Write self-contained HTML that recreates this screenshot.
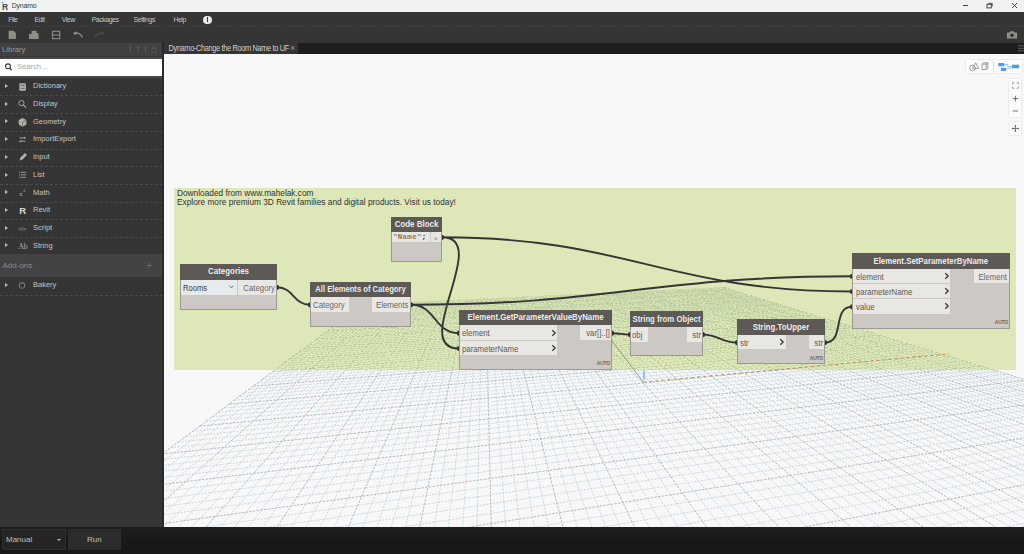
<!DOCTYPE html><html><head><meta charset='utf-8'><style>
*{box-sizing:border-box}
html,body{margin:0;padding:0;width:1024px;height:554px;overflow:hidden;background:#353535;font-family:"Liberation Sans",sans-serif}
.a{position:absolute}
.t{position:absolute;white-space:nowrap;line-height:1}
</style></head><body>
<div class='a' style='left:0;top:0;width:1024px;height:11.5px;background:#f1f2f2'></div>
<div class='t' style='left:11.7px;top:2.5px;font-size:6.9px;letter-spacing:-0.15px;color:#3a3a3a;transform:scaleY(1.08)'>Dynamo</div>
<div class='a' style='left:0;top:11.5px;width:1024px;height:30.5px;background:#353535'></div>
<div class='a' style='left:164px;top:43.3px;width:860px;height:10.7px;background:#1e1e1f'></div>
<div class='a' style='left:164px;top:42px;width:134px;height:12px;background:#353535'></div>
<div class='a' style='left:0;top:43px;width:162px;height:13.3px;background:#414141'></div>
<div class='a' style='left:0;top:56.5px;width:162px;height:21.5px;background:#474747'></div>
<div class='a' style='left:0;top:59px;width:162.2px;height:16.7px;background:#fff'></div>
<div class='a' style='left:162px;top:42px;width:2px;height:485px;background:#2a2a2a'></div>
<div class='a' style='left:164px;top:54px;width:860px;height:473px;background:#f8f8f8;overflow:hidden'>
<svg width='860' height='473' style='position:absolute;left:0;top:0'>
<defs><clipPath id='cfar'><rect x='0' y='0' width='860' height='316'/></clipPath><clipPath id='cnear'><rect x='0' y='316' width='860' height='473'/></clipPath></defs>
<g clip-path='url(#cfar)'>
<path d='M203.1 250.3L-720.3 963.0M207.4 250.1L-665.7 948.3M211.7 249.9L-613.0 934.2M216.0 249.7L-562.2 920.6M224.6 249.3L-465.6 894.7M228.8 249.1L-419.7 882.4M233.0 248.9L-375.3 870.5M237.3 248.7L-332.3 859.0M245.6 248.3L-250.4 837.0M249.8 248.1L-211.3 826.6M253.9 247.9L-173.4 816.4M258.0 247.7L-136.6 806.5M266.2 247.3L-66.2 787.7M270.3 247.1L-32.5 778.6M274.4 246.9L0.3 769.9M278.4 246.7L32.2 761.3M286.5 246.4L93.3 744.9M290.5 246.2L122.7 737.1M294.4 246.0L151.2 729.4M298.4 245.8L179.1 722.0M306.3 245.4L232.7 707.6M310.2 245.2L258.5 700.7M314.1 245.1L283.7 693.9M318.0 244.9L308.2 687.4M325.7 244.5L355.6 674.7M329.6 244.3L378.4 668.6M333.4 244.2L400.8 662.6M337.2 244.0L422.6 656.7M344.8 243.6L464.7 645.4M348.6 243.4L485.1 640.0M352.3 243.3L505.0 634.6M356.0 243.1L524.5 629.4M363.5 242.7L562.3 619.3M367.2 242.6L580.6 614.4M370.9 242.4L598.5 609.6M374.5 242.2L616.1 604.9M381.8 241.9L650.1 595.8M385.5 241.7L666.6 591.3M389.1 241.5L682.8 587.0M392.7 241.4L698.6 582.8M399.8 241.0L729.5 574.5M403.4 240.9L744.4 570.5M406.9 240.7L759.1 566.6M410.5 240.5L773.5 562.7M417.5 240.2L801.6 555.2M421.0 240.0L815.2 551.5M424.5 239.9L828.6 547.9M427.9 239.7L841.8 544.4M434.8 239.4L867.4 537.6M438.3 239.2L879.9 534.2M441.7 239.1L892.1 530.9M445.1 238.9L904.2 527.7M451.9 238.6L927.7 521.4M455.2 238.4L939.1 518.3M458.6 238.3L950.4 515.3M461.9 238.1L961.5 512.3M468.6 237.8L983.1 506.5M471.9 237.7L993.7 503.7M475.2 237.5L1004.1 500.9M478.5 237.4L1014.3 498.2M485.0 237.0L1034.3 492.8M488.3 236.9L1044.1 490.2M491.5 236.7L1053.7 487.6M494.7 236.6L1063.2 485.1M501.2 236.3L1081.7 480.1M504.3 236.1L1090.7 477.7M507.5 236.0L1099.7 475.3M510.7 235.8L1108.4 473.0M517.0 235.5L1125.7 468.4M520.1 235.4L1134.1 466.1M523.3 235.3L1142.4 463.9M526.4 235.1L1150.6 461.7M532.6 234.8L1166.6 457.4M535.7 234.7L1174.4 455.3M538.7 234.5L1182.2 453.2M541.8 234.4L1189.8 451.2M547.9 234.1L1204.8 447.2M550.9 234.0L1212.1 445.2M553.9 233.8L1219.3 443.3M556.9 233.7L1226.5 441.3M198.7 250.5L559.9 233.5M197.5 251.4L561.9 234.1M196.3 252.3L563.9 234.8M193.8 254.2L568.1 236.0M192.4 255.2L570.2 236.7M191.1 256.2L572.4 237.3M189.7 257.2L574.6 238.0M186.9 259.3L579.1 239.4M185.4 260.4L581.4 240.1M184.0 261.5L583.7 240.8M182.4 262.6L586.1 241.5M179.3 265.0L591.1 243.1M177.6 266.2L593.6 243.8M176.0 267.5L596.2 244.6M174.3 268.7L598.8 245.4M170.7 271.4L604.3 247.1M168.9 272.8L607.0 247.9M167.0 274.2L609.9 248.8M165.0 275.6L612.8 249.7M161.0 278.6L618.8 251.5M158.9 280.2L621.9 252.5M156.8 281.8L625.0 253.4M154.6 283.4L628.2 254.4M150.0 286.8L634.9 256.4M147.6 288.6L638.3 257.5M145.2 290.4L641.8 258.6M142.6 292.3L645.4 259.6M137.3 296.3L652.8 261.9M134.6 298.3L656.6 263.1M131.7 300.4L660.5 264.3M128.8 302.6L664.5 265.5M122.6 307.2L672.8 268.0M119.4 309.6L677.1 269.4M116.1 312.1L681.6 270.7M112.6 314.7L686.1 272.1M105.3 320.1L695.5 275.0M101.5 323.0L700.4 276.5M97.6 325.9L705.4 278.0M93.4 329.0L710.5 279.6M84.7 335.5L721.2 282.8M80.1 338.9L726.8 284.5M75.4 342.5L732.5 286.3M70.4 346.2L738.4 288.1M59.8 354.1L750.8 291.9M54.1 358.3L757.2 293.8M48.2 362.7L763.8 295.9M42.1 367.3L770.7 298.0M28.8 377.2L785.0 302.3M21.8 382.5L792.5 304.6M14.3 388.0L800.2 307.0M6.5 393.8L808.3 309.4M-10.4 406.5L825.1 314.6M-19.6 413.3L834.0 317.3M-29.3 420.5L843.2 320.1M-39.5 428.1L852.7 323.0M-61.9 444.9L872.8 329.2M-74.2 454.0L883.5 332.4M-87.3 463.8L894.5 335.8M-101.4 474.3L906.1 339.3M-132.5 497.5L930.5 346.8M-149.8 510.4L943.5 350.8M-168.6 524.4L957.1 354.9M-188.9 539.5L971.3 359.3M-235.0 573.9L1001.6 368.6M-261.4 593.6L1017.9 373.5M-290.3 615.2L1034.9 378.7M-322.4 639.1L1052.8 384.2M-397.7 695.2L1091.4 396.0M-442.3 728.5L1112.3 402.4M-492.9 766.3L1134.4 409.1M-550.8 809.4L1157.7 416.3M-695.2 917.1L1208.6 431.8' stroke='#c2cfd8' stroke-width='1' stroke-dasharray='2.5 1.5' shape-rendering='crispEdges' fill='none'/>
<path d='M198.7 250.5L-777.0 978.1M220.3 249.5L-513.1 907.4M241.4 248.5L-290.7 847.8M262.2 247.5L-100.9 797.0M282.5 246.5L63.1 753.0M302.4 245.6L206.2 714.7M321.9 244.7L332.2 680.9M341.0 243.8L443.9 651.0M359.8 242.9L543.6 624.3M378.2 242.1L633.2 600.3M396.3 241.2L714.2 578.6M414.0 240.4L787.7 558.9M431.4 239.6L854.7 541.0M448.5 238.8L916.0 524.5M465.3 238.0L972.4 509.4M481.8 237.2L1024.4 495.5M498.0 236.4L1072.5 482.6M513.9 235.7L1117.1 470.6M529.5 235.0L1158.6 459.5M544.8 234.2L1197.3 449.1M559.9 233.5L1233.5 439.5M195.0 253.2L566.0 235.4M188.3 258.2L576.8 238.7M180.9 263.8L588.6 242.3M172.5 270.0L601.5 246.2M163.1 277.1L615.8 250.6M152.3 285.1L631.5 255.4M140.0 294.3L649.0 260.8M125.8 304.9L668.6 266.8M109.0 317.4L690.7 273.5M89.2 332.2L715.8 281.2M65.2 350.1L744.5 290.0M35.6 372.1L777.7 300.1M-1.7 400.0L816.5 312.0M-50.4 436.3L862.6 326.1M-116.4 485.5L918.0 343.0M-211.0 556.0L986.1 363.8M-357.9 665.6L1071.6 390.0M-617.4 859.1L1182.4 423.8' stroke='#a6b2ba' stroke-width='1' stroke-dasharray='3 1.5' shape-rendering='crispEdges' fill='none'/>
</g><g clip-path='url(#cnear)'>
<path d='M203.1 250.3L-720.3 963.0M207.4 250.1L-665.7 948.3M211.7 249.9L-613.0 934.2M216.0 249.7L-562.2 920.6M224.6 249.3L-465.6 894.7M228.8 249.1L-419.7 882.4M233.0 248.9L-375.3 870.5M237.3 248.7L-332.3 859.0M245.6 248.3L-250.4 837.0M249.8 248.1L-211.3 826.6M253.9 247.9L-173.4 816.4M258.0 247.7L-136.6 806.5M266.2 247.3L-66.2 787.7M270.3 247.1L-32.5 778.6M274.4 246.9L0.3 769.9M278.4 246.7L32.2 761.3M286.5 246.4L93.3 744.9M290.5 246.2L122.7 737.1M294.4 246.0L151.2 729.4M298.4 245.8L179.1 722.0M306.3 245.4L232.7 707.6M310.2 245.2L258.5 700.7M314.1 245.1L283.7 693.9M318.0 244.9L308.2 687.4M325.7 244.5L355.6 674.7M329.6 244.3L378.4 668.6M333.4 244.2L400.8 662.6M337.2 244.0L422.6 656.7M344.8 243.6L464.7 645.4M348.6 243.4L485.1 640.0M352.3 243.3L505.0 634.6M356.0 243.1L524.5 629.4M363.5 242.7L562.3 619.3M367.2 242.6L580.6 614.4M370.9 242.4L598.5 609.6M374.5 242.2L616.1 604.9M381.8 241.9L650.1 595.8M385.5 241.7L666.6 591.3M389.1 241.5L682.8 587.0M392.7 241.4L698.6 582.8M399.8 241.0L729.5 574.5M403.4 240.9L744.4 570.5M406.9 240.7L759.1 566.6M410.5 240.5L773.5 562.7M417.5 240.2L801.6 555.2M421.0 240.0L815.2 551.5M424.5 239.9L828.6 547.9M427.9 239.7L841.8 544.4M434.8 239.4L867.4 537.6M438.3 239.2L879.9 534.2M441.7 239.1L892.1 530.9M445.1 238.9L904.2 527.7M451.9 238.6L927.7 521.4M455.2 238.4L939.1 518.3M458.6 238.3L950.4 515.3M461.9 238.1L961.5 512.3M468.6 237.8L983.1 506.5M471.9 237.7L993.7 503.7M475.2 237.5L1004.1 500.9M478.5 237.4L1014.3 498.2M485.0 237.0L1034.3 492.8M488.3 236.9L1044.1 490.2M491.5 236.7L1053.7 487.6M494.7 236.6L1063.2 485.1M501.2 236.3L1081.7 480.1M504.3 236.1L1090.7 477.7M507.5 236.0L1099.7 475.3M510.7 235.8L1108.4 473.0M517.0 235.5L1125.7 468.4M520.1 235.4L1134.1 466.1M523.3 235.3L1142.4 463.9M526.4 235.1L1150.6 461.7M532.6 234.8L1166.6 457.4M535.7 234.7L1174.4 455.3M538.7 234.5L1182.2 453.2M541.8 234.4L1189.8 451.2M547.9 234.1L1204.8 447.2M550.9 234.0L1212.1 445.2M553.9 233.8L1219.3 443.3M556.9 233.7L1226.5 441.3M198.7 250.5L559.9 233.5M197.5 251.4L561.9 234.1M196.3 252.3L563.9 234.8M193.8 254.2L568.1 236.0M192.4 255.2L570.2 236.7M191.1 256.2L572.4 237.3M189.7 257.2L574.6 238.0M186.9 259.3L579.1 239.4M185.4 260.4L581.4 240.1M184.0 261.5L583.7 240.8M182.4 262.6L586.1 241.5M179.3 265.0L591.1 243.1M177.6 266.2L593.6 243.8M176.0 267.5L596.2 244.6M174.3 268.7L598.8 245.4M170.7 271.4L604.3 247.1M168.9 272.8L607.0 247.9M167.0 274.2L609.9 248.8M165.0 275.6L612.8 249.7M161.0 278.6L618.8 251.5M158.9 280.2L621.9 252.5M156.8 281.8L625.0 253.4M154.6 283.4L628.2 254.4M150.0 286.8L634.9 256.4M147.6 288.6L638.3 257.5M145.2 290.4L641.8 258.6M142.6 292.3L645.4 259.6M137.3 296.3L652.8 261.9M134.6 298.3L656.6 263.1M131.7 300.4L660.5 264.3M128.8 302.6L664.5 265.5M122.6 307.2L672.8 268.0M119.4 309.6L677.1 269.4M116.1 312.1L681.6 270.7M112.6 314.7L686.1 272.1M105.3 320.1L695.5 275.0M101.5 323.0L700.4 276.5M97.6 325.9L705.4 278.0M93.4 329.0L710.5 279.6M84.7 335.5L721.2 282.8M80.1 338.9L726.8 284.5M75.4 342.5L732.5 286.3M70.4 346.2L738.4 288.1M59.8 354.1L750.8 291.9M54.1 358.3L757.2 293.8M48.2 362.7L763.8 295.9M42.1 367.3L770.7 298.0M28.8 377.2L785.0 302.3M21.8 382.5L792.5 304.6M14.3 388.0L800.2 307.0M6.5 393.8L808.3 309.4M-10.4 406.5L825.1 314.6M-19.6 413.3L834.0 317.3M-29.3 420.5L843.2 320.1M-39.5 428.1L852.7 323.0M-61.9 444.9L872.8 329.2M-74.2 454.0L883.5 332.4M-87.3 463.8L894.5 335.8M-101.4 474.3L906.1 339.3M-132.5 497.5L930.5 346.8M-149.8 510.4L943.5 350.8M-168.6 524.4L957.1 354.9M-188.9 539.5L971.3 359.3M-235.0 573.9L1001.6 368.6M-261.4 593.6L1017.9 373.5M-290.3 615.2L1034.9 378.7M-322.4 639.1L1052.8 384.2M-397.7 695.2L1091.4 396.0M-442.3 728.5L1112.3 402.4M-492.9 766.3L1134.4 409.1M-550.8 809.4L1157.7 416.3M-695.2 917.1L1208.6 431.8' stroke='#bccfdc' stroke-width='0.75' stroke-dasharray='2.2 1.2' fill='none'/>
<path d='M198.7 250.5L-777.0 978.1M220.3 249.5L-513.1 907.4M241.4 248.5L-290.7 847.8M262.2 247.5L-100.9 797.0M282.5 246.5L63.1 753.0M302.4 245.6L206.2 714.7M321.9 244.7L332.2 680.9M341.0 243.8L443.9 651.0M359.8 242.9L543.6 624.3M378.2 242.1L633.2 600.3M396.3 241.2L714.2 578.6M414.0 240.4L787.7 558.9M431.4 239.6L854.7 541.0M448.5 238.8L916.0 524.5M465.3 238.0L972.4 509.4M481.8 237.2L1024.4 495.5M498.0 236.4L1072.5 482.6M513.9 235.7L1117.1 470.6M529.5 235.0L1158.6 459.5M544.8 234.2L1197.3 449.1M559.9 233.5L1233.5 439.5M195.0 253.2L566.0 235.4M188.3 258.2L576.8 238.7M180.9 263.8L588.6 242.3M172.5 270.0L601.5 246.2M163.1 277.1L615.8 250.6M152.3 285.1L631.5 255.4M140.0 294.3L649.0 260.8M125.8 304.9L668.6 266.8M109.0 317.4L690.7 273.5M89.2 332.2L715.8 281.2M65.2 350.1L744.5 290.0M35.6 372.1L777.7 300.1M-1.7 400.0L816.5 312.0M-50.4 436.3L862.6 326.1M-116.4 485.5L918.0 343.0M-211.0 556.0L986.1 363.8M-357.9 665.6L1071.6 390.0M-617.4 859.1L1182.4 423.8' stroke='#9fadb7' stroke-width='0.8' stroke-dasharray='2.5 1.2' fill='none'/>
</g>
</svg>
</div>
<div class='a' style='left:0;top:527px;width:1024px;height:27px;background:linear-gradient(#1f1f1f 0px,#1d1d1d 6px,#181818 13px,#181818)'></div>
<div class='t' style='left:8.2px;top:16.2px;font-size:7px;letter-spacing:-0.5px;color:#c4c4c4;transform:scaleY(1.1)'>File</div>
<div class='t' style='left:34.4px;top:16.2px;font-size:7px;letter-spacing:-0.5px;color:#c4c4c4;transform:scaleY(1.1)'>Edit</div>
<div class='t' style='left:61.7px;top:16.2px;font-size:7px;letter-spacing:-0.5px;color:#c4c4c4;transform:scaleY(1.1)'>View</div>
<div class='t' style='left:91.7px;top:16.2px;font-size:7px;letter-spacing:-0.5px;color:#c4c4c4;transform:scaleY(1.1)'>Packages</div>
<div class='t' style='left:133.6px;top:16.2px;font-size:7px;letter-spacing:-0.5px;color:#c4c4c4;transform:scaleY(1.1)'>Settings</div>
<div class='t' style='left:173.6px;top:16.2px;font-size:7px;letter-spacing:-0.5px;color:#c4c4c4;transform:scaleY(1.1)'>Help</div>
<div class='a' style='left:203px;top:15.5px;width:8.5px;height:8.5px;border-radius:50%;background:#e8e8e8'></div>
<div class='a' style='left:206.6px;top:17px;width:1.4px;height:3.6px;background:#353535'></div>
<div class='a' style='left:206.6px;top:21.2px;width:1.4px;height:1.3px;background:#353535'></div>
<div class='a' style='left:0;top:26px;width:1024px;height:1px;background:repeating-linear-gradient(90deg,#4a4a4a 0 1px,transparent 1px 3px)'></div>
<div class='t' style='left:2px;top:45.5px;font-size:7.6px;color:#9a9a9a'>Library</div>
<div class='t' style='left:17px;top:63px;font-size:7.6px;color:#a8a8a8'>Search...</div>
<svg class='a' style='left:4px;top:62px' width='9' height='10'><circle cx='4' cy='4.3' r='2.4' stroke='#333' stroke-width='1.1' fill='none'/><path d='M5.7 6.1 L7.6 8.2' stroke='#333' stroke-width='1.3'/></svg>
<div class='t' style='left:33px;top:82.2px;font-size:7.5px;color:#c2c2c2'>Dictionary</div>
<div class='a' style='left:5px;top:83.9px;width:0;height:0;border-left:3.6px solid #bdbdbd;border-top:2.3px solid transparent;border-bottom:2.3px solid transparent'></div>
<div class='a' style='left:0;top:95.3px;width:162px;height:1px;background:repeating-linear-gradient(90deg,#4b4b4b 0 3px,transparent 3px 5px)'></div>
<div class='t' style='left:33px;top:99.9px;font-size:7.5px;color:#c2c2c2'>Display</div>
<div class='a' style='left:5px;top:101.6px;width:0;height:0;border-left:3.6px solid #bdbdbd;border-top:2.3px solid transparent;border-bottom:2.3px solid transparent'></div>
<div class='a' style='left:0;top:113.0px;width:162px;height:1px;background:repeating-linear-gradient(90deg,#4b4b4b 0 3px,transparent 3px 5px)'></div>
<div class='t' style='left:33px;top:117.6px;font-size:7.5px;color:#c2c2c2'>Geometry</div>
<div class='a' style='left:5px;top:119.3px;width:0;height:0;border-left:3.6px solid #bdbdbd;border-top:2.3px solid transparent;border-bottom:2.3px solid transparent'></div>
<div class='a' style='left:0;top:130.7px;width:162px;height:1px;background:repeating-linear-gradient(90deg,#4b4b4b 0 3px,transparent 3px 5px)'></div>
<div class='t' style='left:33px;top:135.4px;font-size:7.5px;color:#c2c2c2'>ImportExport</div>
<div class='a' style='left:5px;top:137.1px;width:0;height:0;border-left:3.6px solid #bdbdbd;border-top:2.3px solid transparent;border-bottom:2.3px solid transparent'></div>
<div class='a' style='left:0;top:148.5px;width:162px;height:1px;background:repeating-linear-gradient(90deg,#4b4b4b 0 3px,transparent 3px 5px)'></div>
<div class='t' style='left:33px;top:153.1px;font-size:7.5px;color:#c2c2c2'>Input</div>
<div class='a' style='left:5px;top:154.8px;width:0;height:0;border-left:3.6px solid #bdbdbd;border-top:2.3px solid transparent;border-bottom:2.3px solid transparent'></div>
<div class='a' style='left:0;top:166.2px;width:162px;height:1px;background:repeating-linear-gradient(90deg,#4b4b4b 0 3px,transparent 3px 5px)'></div>
<div class='t' style='left:33px;top:170.8px;font-size:7.5px;color:#c2c2c2'>List</div>
<div class='a' style='left:5px;top:172.5px;width:0;height:0;border-left:3.6px solid #bdbdbd;border-top:2.3px solid transparent;border-bottom:2.3px solid transparent'></div>
<div class='a' style='left:0;top:183.9px;width:162px;height:1px;background:repeating-linear-gradient(90deg,#4b4b4b 0 3px,transparent 3px 5px)'></div>
<div class='t' style='left:33px;top:188.5px;font-size:7.5px;color:#c2c2c2'>Math</div>
<div class='a' style='left:5px;top:190.2px;width:0;height:0;border-left:3.6px solid #bdbdbd;border-top:2.3px solid transparent;border-bottom:2.3px solid transparent'></div>
<div class='a' style='left:0;top:201.6px;width:162px;height:1px;background:repeating-linear-gradient(90deg,#4b4b4b 0 3px,transparent 3px 5px)'></div>
<div class='t' style='left:33px;top:206.2px;font-size:7.5px;color:#c2c2c2'>Revit</div>
<div class='a' style='left:5px;top:207.9px;width:0;height:0;border-left:3.6px solid #bdbdbd;border-top:2.3px solid transparent;border-bottom:2.3px solid transparent'></div>
<div class='a' style='left:0;top:219.3px;width:162px;height:1px;background:repeating-linear-gradient(90deg,#4b4b4b 0 3px,transparent 3px 5px)'></div>
<div class='t' style='left:33px;top:224.0px;font-size:7.5px;color:#c2c2c2'>Script</div>
<div class='a' style='left:5px;top:225.7px;width:0;height:0;border-left:3.6px solid #bdbdbd;border-top:2.3px solid transparent;border-bottom:2.3px solid transparent'></div>
<div class='a' style='left:0;top:237.1px;width:162px;height:1px;background:repeating-linear-gradient(90deg,#4b4b4b 0 3px,transparent 3px 5px)'></div>
<div class='t' style='left:33px;top:241.7px;font-size:7.5px;color:#c2c2c2'>String</div>
<div class='a' style='left:5px;top:243.4px;width:0;height:0;border-left:3.6px solid #bdbdbd;border-top:2.3px solid transparent;border-bottom:2.3px solid transparent'></div>
<div class='a' style='left:0;top:254.8px;width:162px;height:1px;background:repeating-linear-gradient(90deg,#4b4b4b 0 3px,transparent 3px 5px)'></div>
<div class='a' style='left:0;top:254px;width:162px;height:23px;background:#434343'></div>
<div class='t' style='left:2.5px;top:261.5px;font-size:8px;color:#8a8a8a'>Add-ons</div>
<div class='t' style='left:146px;top:260px;font-size:11px;color:#6a6a6a'>+</div>
<div class='t' style='left:33px;top:281.3px;font-size:7.5px;color:#c2c2c2'>Bakery</div>
<div class='a' style='left:5px;top:283px;width:0;height:0;border-left:3.6px solid #bdbdbd;border-top:2.3px solid transparent;border-bottom:2.3px solid transparent'></div>
<div class='a' style='left:0;top:294.5px;width:162px;height:1px;background:repeating-linear-gradient(90deg,#4b4b4b 0 3px,transparent 3px 5px)'></div>
<svg class='a' style='left:0;top:0' width='1024' height='554'><text x='2' y='9.6' font-family='Liberation Sans' font-weight='bold' font-size='8.5' fill='#4a4a4a'>R</text><path d='M1.8 2.6h1.5M6.5 9.7h1.5' stroke='#3d9be9' stroke-width='1.2'/><path d='M963 5.5h5' stroke='#333' stroke-width='0.9'/><rect x='987' y='4.3' width='4.3' height='3.6' fill='none' stroke='#333' stroke-width='0.9'/><path d='M988.3 3.3h3.9v3.4' stroke='#333' stroke-width='0.8' fill='none'/><path d='M1012 3l5 5M1017 3l-5 5' stroke='#333' stroke-width='0.9'/><path d='M8.6 30.7h5l2.3 2.3v6h-7.3z' fill='#8e8e86'/><path d='M31.5 30.8h5v3h-5z' fill='#8e8e86'/><path d='M29 34h3l1 -1h4.5l1.2 1v5h-9.7z' fill='#8e8e86'/><rect x='52.5' y='31.3' width='7.2' height='7.4' fill='none' stroke='#8e8e86' stroke-width='1.1'/><path d='M52.5 35h7.2' stroke='#8e8e86' stroke-width='1'/><path d='M74 33.2 C77 32.5 80.5 33.5 82.5 37.5' stroke='#8e8e86' stroke-width='1.3' fill='none'/><path d='M73 33.4 L76.3 31 L76.3 35.3z' fill='#8e8e86'/><path d='M103.5 33.2 C100.5 32.5 97 33.5 95 37.5' stroke='#4b4b4b' stroke-width='1.3' fill='none'/><path d='M104.5 33.4 L101.2 31 L101.2 35.3z' fill='#4b4b4b'/><path d='M1007 32.5h2.5l1-1.3h3l1 1.3h2.5v6h-10z' fill='#8f8f84'/><circle cx='1012' cy='35.3' r='1.7' fill='#2a2a2a'/><path d='M130.4 46v6M145.5 46v6' stroke='#5c5c5c' stroke-width='1'/><path d='M136 46.5h4.5l-1.7 2.2v2.6l-1.1 0.6v-3.2z' fill='#575757'/><path d='M151 52.5h6M152 52v-3.5h4v3.5M153 48.5v-1.5h2v1.5' stroke='#575757' stroke-width='0.8' fill='none'/><rect x='19.3' y='83.2' width='6.6' height='7.6' rx='1' fill='#b0b0a8'/><path d='M20.5 85.4h4.2M20.5 88.4h4.2' stroke='#555' stroke-width='0.8'/><circle cx='21.5' cy='103.1' r='2.6' fill='none' stroke='#b0b0a8' stroke-width='0.9'/><path d='M23.3 104.9l2.7 2.7' stroke='#b0b0a8' stroke-width='1.1'/><path d='M18.7 120.1l3.8-2.2 3.9 2.2v4.5l-3.9 2.2-3.8-2.2z' fill='#b0b0a8'/><path d='M22.5 122.2l3.9-2.1M22.5 122.2v4' stroke='#555' stroke-width='0.6'/><path d='M19.5 137.9h6M19.5 141.2h6' stroke='#b0b0a8' stroke-width='0.9'/><path d='M25.8 137.9l-1.5-1.2v2.4z M19.2 141.2l1.5-1.2v2.4z' fill='#b0b0a8'/><path d='M19.5 160.6l1-3 4.5-4.5 2 2-4.5 4.5z' fill='#b0b0a8'/><path d='M19 172.3h7M19 174.8h7M19 177.3h7' stroke='#b0b0a8' stroke-width='0.8' stroke-dasharray='1 0.6 6'/><text x='19' y='195.8' font-family='Liberation Serif' font-size='7' fill='#b0b0a8'>x</text><text x='23.2' y='191.7' font-family='Liberation Sans' font-size='3.8' fill='#b0b0a8'>2</text><text x='19.2' y='213.8' font-family='Liberation Sans' font-weight='bold' font-size='9.5' fill='#d8d8d8'>R</text><text x='18.2' y='230.6' font-family='Liberation Sans' font-size='5.6' fill='#b0b0a8'>&lt;/&gt;</text><text x='18.4' y='248.7' font-family='Liberation Serif' font-size='7.6' fill='#b0b0a8'>Ab</text><circle cx='22' cy='285.5' r='2.8' fill='none' stroke='#8a8a8a' stroke-width='1'/><path d='M19.5 288h5' stroke='#3b4a70' stroke-width='0.9'/><path d='M1018 45.8h6M1018 48.3h6M1018 50.8h6' stroke='#7a7a7a' stroke-width='0.7'/></svg>
<div class='t' style='left:168.5px;top:44.8px;font-size:7.4px;letter-spacing:-0.35px;color:#cfcfcf;transform:scaleY(1.12)'>Dynamo-Change the Room Name to UF</div>
<div class='t' style='left:290px;top:44px;font-size:9px;color:#9a9a9a'>&#215;</div>
<div class='a' style='left:2px;top:529px;width:64px;height:21px;background:#252525;border:1px solid #303030'></div>
<div class='t' style='left:6px;top:536.3px;font-size:8px;color:#c0c0b8'>Manual</div>
<div class='a' style='left:56.5px;top:539px;width:0;height:0;border-top:2.5px solid #bbb;border-left:2.5px solid transparent;border-right:2.5px solid transparent'></div>
<div class='a' style='left:67.5px;top:529px;width:53.5px;height:21px;background:#2c2c2c'></div>
<div class='t' style='left:87px;top:536.3px;font-size:8px;color:#c0c0b8'>Run</div>
<div class='a' style='left:174px;top:187.5px;width:841.5px;height:182.3px;background:rgba(203,220,140,0.6)'></div>
<div class='t' style='left:177px;top:188.5px;font-size:8.3px;line-height:9.5px;color:#333'>Downloaded from www.mahelak.com<br>Explore more premium 3D Revit families and digital products. Visit us today!</div>
<svg class='a' style='left:0;top:0' width='1024' height='554'><path d='M643.5 382 L949 354' stroke='#c98a4e' stroke-width='1' stroke-dasharray='3 3' fill='none'/><path d='M644 370.5 L644 379.5' stroke='#5aa8f0' stroke-width='1.2'/><path d='M644 383 L600 325' stroke='#6f7d66' stroke-width='0.7' fill='none'/></svg>
<svg class='a' style='left:0;top:0' width='1024' height='554'><path d='M277 287.3C293.8 287.3 293.2 304.8 310 304.8M411 304.8C436.1 304.8 433.9 333.2 459 333.2M411 304.8C609.9 304.8 653.1 276.3 852 276.3M442 237.3C492.6 237.3 408.4 348.5 459 348.5M442 237.3C628.1 237.3 665.9 291.5 852 291.5M612 333.2C620.1 333.2 621.9 334.6 630 334.6M703 334.6C718.7 334.6 721.3 342.6 737 342.6M825 342.6C845.2 342.6 831.8 306.8 852 306.8' stroke='#353535' stroke-width='1.9' fill='none'/><path d='M277 284.7A2.2 2.6 0 0 1 277 289.90000000000003Z M310 302.2A2.2 2.6 0 0 0 310 307.40000000000003Z M411 302.2A2.2 2.6 0 0 1 411 307.40000000000003Z M459 330.59999999999997A2.2 2.6 0 0 0 459 335.8Z M411 302.2A2.2 2.6 0 0 1 411 307.40000000000003Z M852 273.7A2.2 2.6 0 0 0 852 278.90000000000003Z M442 234.70000000000002A2.2 2.6 0 0 1 442 239.9Z M459 345.9A2.2 2.6 0 0 0 459 351.1Z M442 234.70000000000002A2.2 2.6 0 0 1 442 239.9Z M852 288.9A2.2 2.6 0 0 0 852 294.1Z M612 330.59999999999997A2.2 2.6 0 0 1 612 335.8Z M630 332.0A2.2 2.6 0 0 0 630 337.20000000000005Z M703 332.0A2.2 2.6 0 0 1 703 337.20000000000005Z M737 340.0A2.2 2.6 0 0 0 737 345.20000000000005Z M825 340.0A2.2 2.6 0 0 1 825 345.20000000000005Z M852 304.2A2.2 2.6 0 0 0 852 309.40000000000003Z ' fill='#333'/></svg>
<div class='a' style='left:180px;top:264px;width:97px;height:46px;background:#ccc8c3;border:1px solid #9c9893'></div>
<div class='a' style='left:180px;top:264px;width:97px;height:15.5px;background:#5d5955'></div>
<div class='t' style='left:180px;top:268.4px;width:97px;text-align:center;font-size:7.9559999999999995px;font-weight:bold;color:#ececec;transform:scaleY(1.12)'>Categories</div>
<div class='a' style='left:181px;top:279.5px;width:56px;height:15.0px;background:#e7eaec'></div>
<div class='a' style='left:238px;top:279.5px;width:38px;height:15.0px;background:#e8e7e3'></div>
<div class='t' style='left:183px;top:284.7px;font-size:7.6px;color:#3a3a3a;transform:scaleY(1.12)'>Rooms</div>
<svg class='a' style='left:229px;top:284.5px' width='5' height='4'><path d='M0.5 0.8 L2.4 2.8 L4.3 0.8' stroke='#555' stroke-width='0.9' fill='none'/></svg>
<div class='t' style='right:749px;top:284.9px;font-size:7.8px;color:#6a6864;transform:scaleY(1.12)'>Category</div>
<div class='a' style='left:391px;top:216.5px;width:51px;height:45.0px;background:#ccc8c3;border:1px solid #9c9893'></div>
<div class='a' style='left:391px;top:216.5px;width:51px;height:15.099999999999994px;background:#5d5955'></div>
<div class='t' style='left:391px;top:220.7px;width:51px;text-align:center;font-size:7.9559999999999995px;font-weight:bold;color:#ececec;transform:scaleY(1.12)'>Code Block</div>
<div class='a' style='left:392px;top:231.6px;width:38px;height:10.900000000000006px;background:#e7e6e2'></div>
<div class='a' style='left:431px;top:231.6px;width:10px;height:10.900000000000006px;background:#e8e7e3'></div>
<div class='t' style='left:393px;top:234.3px;font-family:"Liberation Mono",monospace;font-size:7.4px;font-weight:bold;letter-spacing:0.35px;color:#9a7448'><span style='color:#8a8a8a'>"</span>Name<span style='color:#8a8a8a'>"</span><span style='color:#222'>;</span></div>
<div class='t' style='left:433.5px;top:235.1px;font-size:7px;color:#777;transform:scaleY(1.12)'>&gt;</div>
<div class='a' style='left:310px;top:282px;width:101px;height:45px;background:#ccc8c3;border:1px solid #9c9893'></div>
<div class='a' style='left:310px;top:282px;width:101px;height:15px;background:#5d5955'></div>
<div class='t' style='left:310px;top:286.3px;width:101px;text-align:center;font-size:7.65px;font-weight:bold;color:#ececec;transform:scaleY(1.12)'>All Elements of Category</div>
<div class='a' style='left:311px;top:297px;width:38px;height:15px;background:#e8e7e3'></div>
<div class='a' style='left:372px;top:297px;width:38px;height:15px;background:#e8e7e3'></div>
<div class='t' style='left:313px;top:302.2px;font-size:7.8px;color:#6a6864;transform:scaleY(1.12)'>Category</div>
<div class='t' style='right:615.5px;top:302.2px;font-size:7.8px;color:#6a6864;transform:scaleY(1.12)'>Elements</div>
<div class='a' style='left:459px;top:310px;width:153px;height:59.5px;background:#ccc8c3;border:1px solid #9c9893'></div>
<div class='a' style='left:459px;top:310px;width:153px;height:14.600000000000023px;background:#5d5955'></div>
<div class='t' style='left:459px;top:314.0px;width:153px;text-align:center;font-size:7.854px;font-weight:bold;color:#ececec;transform:scaleY(1.12)'>Element.GetParameterValueByName</div>
<div class='a' style='left:460px;top:324.6px;width:97px;height:15.399999999999977px;background:#e8e7e3'></div>
<div class='a' style='left:460px;top:341px;width:97px;height:14.399999999999977px;background:#e8e7e3'></div>
<div class='a' style='left:580px;top:324.6px;width:31px;height:15.799999999999955px;background:#e8e7e3'></div>
<div class='t' style='left:462px;top:330.2px;font-size:7.8px;color:#5c5a56;transform:scaleY(1.12)'>element</div>
<div class='t' style='left:462px;top:345.6px;font-size:7.8px;color:#5c5a56;transform:scaleY(1.12)'>parameterName</div>
<svg class='a' style='left:550.5px;top:328.6px' width='6' height='8'><path d='M1.3 1.2 L4.2 4 L1.3 6.8' stroke='#3a3a3a' stroke-width='1.3' fill='none'/></svg>
<svg class='a' style='left:550.5px;top:344px' width='6' height='8'><path d='M1.3 1.2 L4.2 4 L1.3 6.8' stroke='#3a3a3a' stroke-width='1.3' fill='none'/></svg>
<div class='t' style='right:414px;top:330.2px;font-size:7.8px;color:#5c5a56;transform:scaleY(1.12)'>var[]..[]</div>
<div class='t' style='right:414px;top:360.5px;font-size:5px;font-weight:bold;color:#6e6a66;letter-spacing:-0.2px'>AUTO</div>
<div class='a' style='left:630px;top:311px;width:73px;height:45.30000000000001px;background:#ccc8c3;border:1px solid #9c9893'></div>
<div class='a' style='left:630px;top:311px;width:73px;height:15.800000000000011px;background:#5d5955'></div>
<div class='t' style='left:630px;top:315.7px;width:73px;text-align:center;font-size:7.752px;font-weight:bold;color:#ececec;transform:scaleY(1.12)'>String from Object</div>
<div class='a' style='left:631px;top:326.8px;width:17px;height:14.899999999999977px;background:#e8e7e3'></div>
<div class='a' style='left:686.5px;top:326.8px;width:15.5px;height:14.899999999999977px;background:#e8e7e3'></div>
<div class='t' style='left:632px;top:331.9px;font-size:7.8px;color:#5c5a56;transform:scaleY(1.12)'>obj</div>
<div class='t' style='right:323px;top:331.9px;font-size:7.8px;color:#5c5a56;transform:scaleY(1.12)'>str</div>
<div class='a' style='left:737px;top:319px;width:88px;height:45px;background:#ccc8c3;border:1px solid #9c9893'></div>
<div class='a' style='left:737px;top:319px;width:88px;height:15.800000000000011px;background:#5d5955'></div>
<div class='t' style='left:737px;top:323.6px;width:88px;text-align:center;font-size:7.854px;font-weight:bold;color:#ececec;transform:scaleY(1.12)'>String.ToUpper</div>
<div class='a' style='left:738px;top:334.8px;width:47.60000000000002px;height:14.5px;background:#e8e7e3'></div>
<div class='a' style='left:809px;top:334.8px;width:15px;height:14.5px;background:#e8e7e3'></div>
<div class='t' style='left:740px;top:339.8px;font-size:7.8px;color:#5c5a56;transform:scaleY(1.12)'>str</div>
<svg class='a' style='left:779px;top:338.2px' width='6' height='8'><path d='M1.3 1.2 L4.2 4 L1.3 6.8' stroke='#3a3a3a' stroke-width='1.3' fill='none'/></svg>
<div class='t' style='right:201px;top:339.8px;font-size:7.8px;color:#5c5a56;transform:scaleY(1.12)'>str</div>
<div class='t' style='right:201px;top:355.5px;font-size:5px;font-weight:bold;color:#6e6a66;letter-spacing:-0.2px'>AUTO</div>
<div class='a' style='left:852px;top:253px;width:157.60000000000002px;height:75.5px;background:#ccc8c3;border:1px solid #9c9893'></div>
<div class='a' style='left:852px;top:253px;width:157.60000000000002px;height:15.699999999999989px;background:#5d5955'></div>
<div class='t' style='left:852px;top:257.6px;width:157.60000000000002px;text-align:center;font-size:7.854px;font-weight:bold;color:#ececec;transform:scaleY(1.12)'>Element.SetParameterByName</div>
<div class='a' style='left:853px;top:268.7px;width:97px;height:14.5px;background:#e8e7e3'></div>
<div class='a' style='left:853px;top:284.2px;width:97px;height:14.0px;background:#e8e7e3'></div>
<div class='a' style='left:853px;top:299.2px;width:97px;height:14.699999999999989px;background:#e8e7e3'></div>
<div class='a' style='left:973.6px;top:268.7px;width:35.0px;height:14.100000000000023px;background:#e8e7e3'></div>
<div class='t' style='left:856px;top:273.6px;font-size:7.8px;color:#5c5a56;transform:scaleY(1.12)'>element</div>
<div class='t' style='left:856px;top:288.6px;font-size:7.8px;color:#5c5a56;transform:scaleY(1.12)'>parameterName</div>
<div class='t' style='left:856px;top:303.9px;font-size:7.8px;color:#5c5a56;transform:scaleY(1.12)'>value</div>
<svg class='a' style='left:943.5px;top:272px' width='6' height='8'><path d='M1.3 1.2 L4.2 4 L1.3 6.8' stroke='#3a3a3a' stroke-width='1.3' fill='none'/></svg>
<svg class='a' style='left:943.5px;top:287px' width='6' height='8'><path d='M1.3 1.2 L4.2 4 L1.3 6.8' stroke='#3a3a3a' stroke-width='1.3' fill='none'/></svg>
<svg class='a' style='left:943.5px;top:302.3px' width='6' height='8'><path d='M1.3 1.2 L4.2 4 L1.3 6.8' stroke='#3a3a3a' stroke-width='1.3' fill='none'/></svg>
<div class='t' style='right:17px;top:273.6px;font-size:7.8px;color:#6a6864;transform:scaleY(1.12)'>Element</div>
<div class='t' style='right:16px;top:319.5px;font-size:5px;font-weight:bold;color:#6e6a66;letter-spacing:-0.2px'>AUTO</div>
<div class='a' style='left:966px;top:60.3px;width:56px;height:13px;background:#fcfcfc;box-shadow:0 0 1.5px rgba(0,0,0,0.18)'></div>
<div class='a' style='left:993.3px;top:61px;width:1px;height:11.6px;background:#e2e2e2'></div>
<div class='a' style='left:1009px;top:79px;width:12.4px;height:38.4px;background:#fcfcfc;box-shadow:0 0 1.5px rgba(0,0,0,0.18)'></div>
<div class='a' style='left:1009px;top:121.8px;width:12.4px;height:13.7px;background:#fcfcfc;box-shadow:0 0 1.5px rgba(0,0,0,0.18)'></div>
<svg class='a' style='left:0;top:0' width='1024' height='554'><circle cx='972.5' cy='68' r='2.8' fill='none' stroke='#777' stroke-width='0.7'/><path d='M975.5 62.8l3.3 5.5h-6.6z' fill='none' stroke='#777' stroke-width='0.7'/><path d='M982 64.2h4.2l1.6-1.4h-4.2zM982 64.2v5.3h4.2v-5.3M986.2 69.5l1.6-1.4v-5.3' fill='none' stroke='#777' stroke-width='0.7'/><rect x='998.3' y='63' width='6' height='3.3' fill='#4aa0e8'/><rect x='1001' y='67.8' width='5' height='3.2' fill='#4aa0e8'/><rect x='1012' y='64.7' width='7' height='3.6' fill='#4aa0e8'/><path d='M1004.3 64.6h3.5v2l4 0M1006 69.3l5.5 -2' stroke='#4aa0e8' stroke-width='0.6' fill='none'/><path d='M1012.7 84.3v-1.6h1.6M1016.7 82.7h1.6v1.6M1018.3 86.7v1.6h-1.6M1014.3 88.3h-1.6v-1.6' stroke='#777' stroke-width='0.7' fill='none'/><path d='M1012.6 98.6h5.6M1015.4 95.8v5.6' stroke='#666' stroke-width='0.9'/><path d='M1012.8 111h5.2' stroke='#666' stroke-width='0.9'/><path d='M1012 128.5h6.8M1015.4 125.1v6.8' stroke='#666' stroke-width='0.9'/><path d='M1011.8 128.5l1.3-1.2v2.4zM1019 128.5l-1.3-1.2v2.4zM1015.4 124.9l-1.2 1.3h2.4zM1015.4 132.1l-1.2-1.3h2.4z' fill='#666'/></svg>
</body></html>
